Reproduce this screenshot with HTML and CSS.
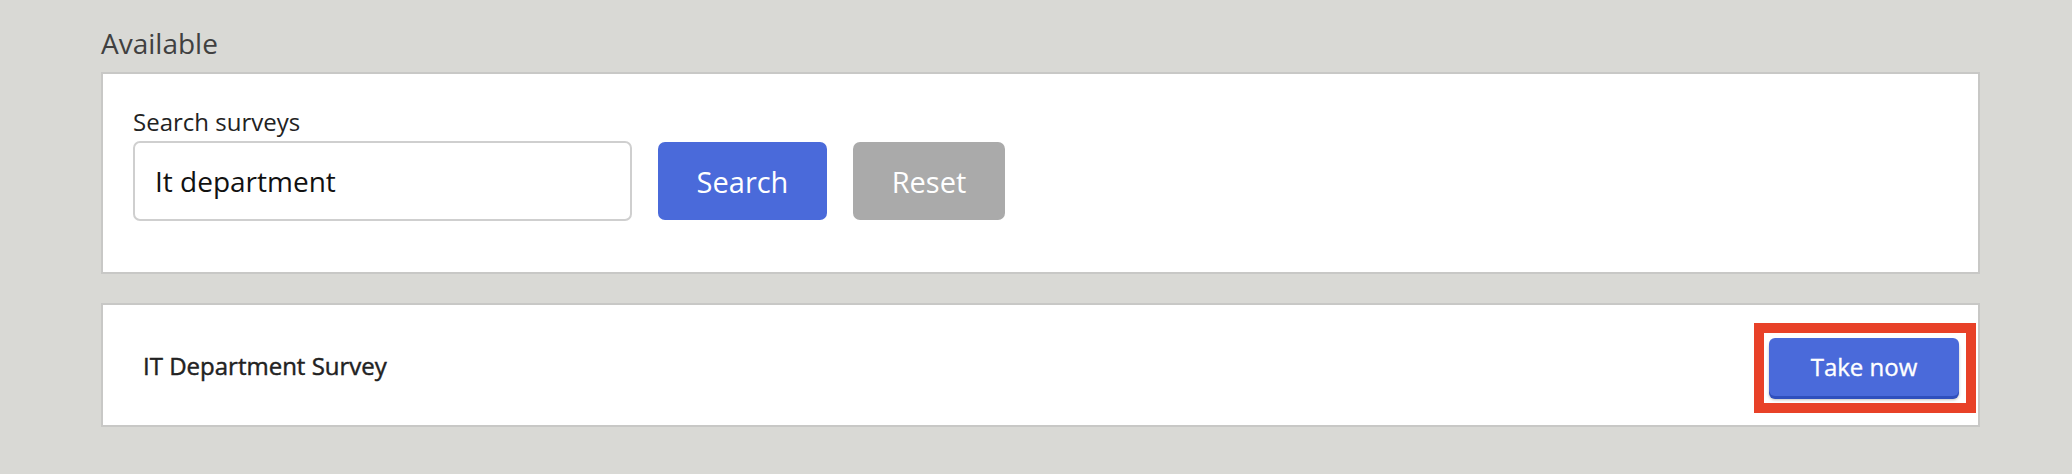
FILE: index.html
```html
<!DOCTYPE html>
<html lang="en">
<head>
<meta charset="utf-8">
<title>Available surveys</title>
<link rel="stylesheet" href="styles.css">
</head>
<body>
<main class="page">
  <h2 class="section-title">Available</h2>
  <section class="card search-card">
    <label class="field-label" for="q">Search surveys</label>
    <div class="search-row">
      <input id="q" class="search-input" type="text" value="It department">
      <button class="btn btn-primary btn-search">Search</button>
      <button class="btn btn-muted btn-reset">Reset</button>
    </div>
  </section>
  <section class="card survey-card">
    <span class="survey-name">IT Department Survey</span>
    <span class="highlight-wrap">
      <button class="btn btn-primary btn-take">Take now</button>
      <span class="highlight"></span>
    </span>
  </section>
</main>
</body>
</html>
```

FILE: styles.css
```css
* { box-sizing: border-box; }
html, body { margin: 0; padding: 0; }
body {
  background: #d9d9d5;
  font-family: "Open Sans", "Noto Sans", sans-serif;
  width: 2072px;
  height: 474px;
}
.page {
  padding: 22px 92px 0 101px;
  display: flex;
  flex-direction: column;
}
.section-title {
  margin: 0 0 8px 0;
  font-size: 28px;
  font-weight: 400;
  line-height: 42px;
  color: #404040;
}
.card {
  background: #fff;
  border: 2px solid #c8c8c6;
}
.search-card {
  height: 202px;
  padding: 32px 30px 0 30px;
  display: flex;
  flex-direction: column;
}
.field-label {
  font-size: 24px;
  line-height: 32px;
  color: #222;
  margin-bottom: 3px;
}
.search-row {
  display: flex;
  align-items: center;
  gap: 26px;
}
.search-input {
  width: 499px;
  height: 80px;
  border: 2px solid #cfcfcf;
  border-radius: 7px;
  padding: 0 20px;
  font-family: inherit;
  font-size: 28px;
  color: #111;
  outline: none;
}
.btn {
  border: none;
  font-family: inherit;
  color: #fff;
  cursor: pointer;
}
.btn-primary { background: #4a6ada; }
.btn-muted { background: #aaaaaa; }
.btn-search, .btn-reset {
  height: 78px;
  border-radius: 7px;
  font-size: 29px;
}
.btn-search { width: 169px; }
.btn-reset { width: 152px; }
.survey-card {
  margin-top: 29px;
  height: 124px;
  padding: 0 19px 0 40px;
  display: flex;
  align-items: center;
  justify-content: space-between;
}
.survey-name {
  font-size: 24px;
  font-weight: 400;
  -webkit-text-stroke: 0.45px #222;
  color: #222;
}
.highlight-wrap {
  position: relative;
  display: inline-flex;
  margin-top: 3px;
}
.btn-take {
  width: 190px;
  height: 58px;
  border-radius: 6px;
  font-size: 24px;
  font-weight: 400;
  -webkit-text-stroke: 0.35px #fff;
  box-shadow: 0 3px 0 #2f4fbd, 0 4px 3px rgba(0,0,0,0.25);
}
.highlight {
  position: absolute;
  left: -15px;
  right: -17px;
  top: -15px;
  bottom: -17px;
  border: 10px solid #e84128;
  pointer-events: none;
}
```
